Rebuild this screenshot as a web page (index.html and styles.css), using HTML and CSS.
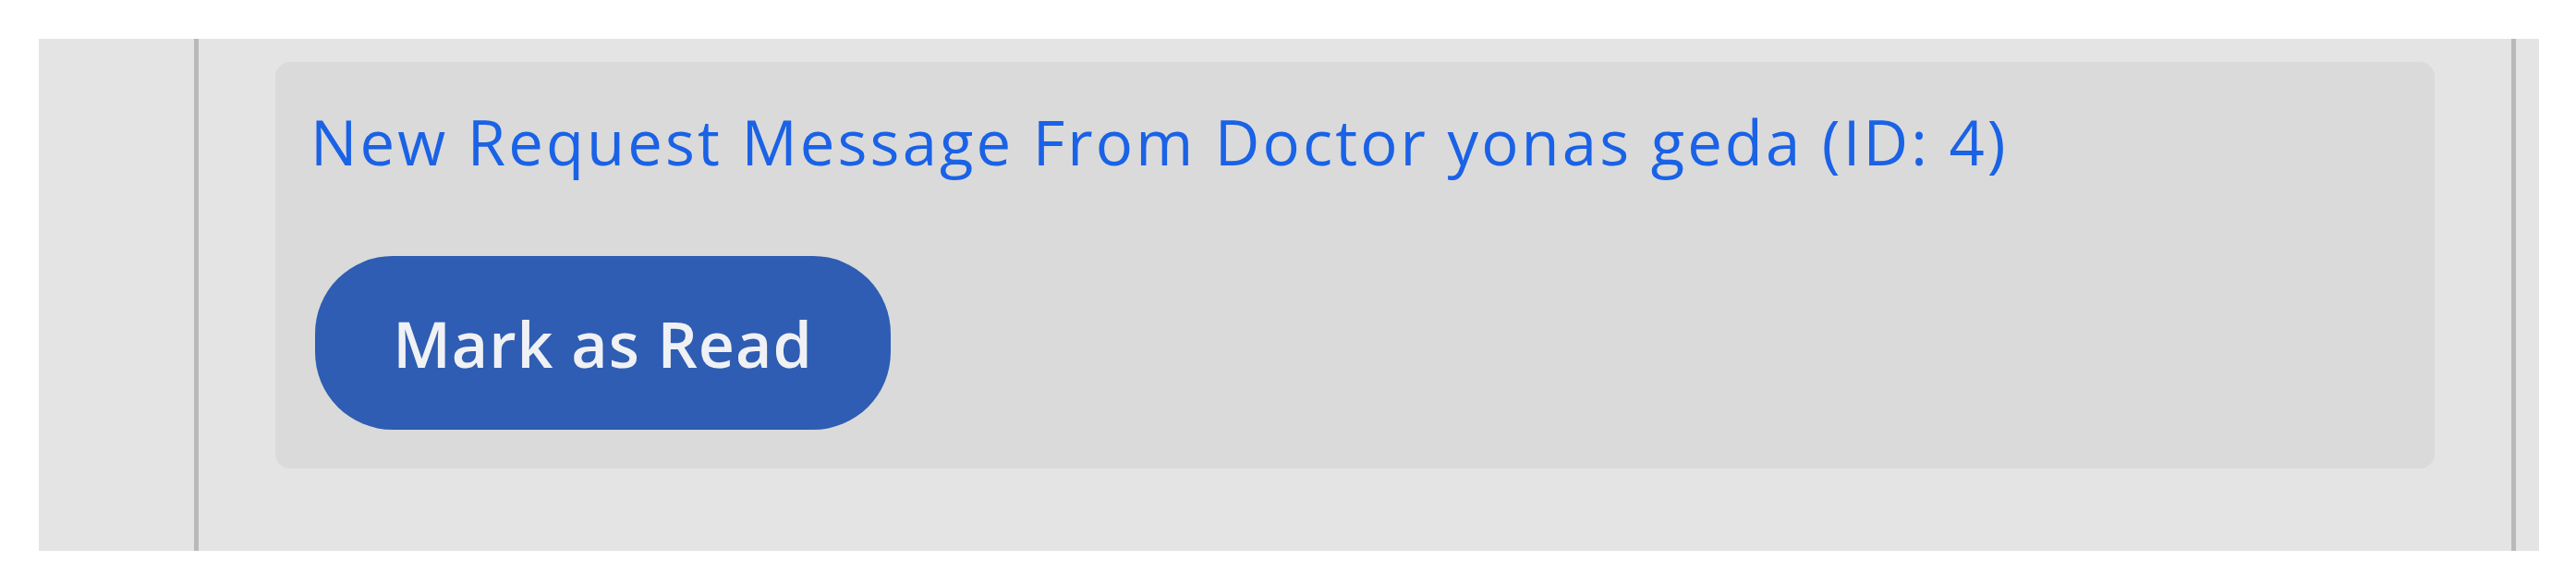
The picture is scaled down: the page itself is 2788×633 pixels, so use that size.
FILE: index.html
```html
<!DOCTYPE html>
<html lang="en">
<head>
    <meta charset="UTF-8">
    <meta name="viewport" content="width=device-width, initial-scale=1.0">
    <title>Notifications</title>
    <link rel="stylesheet" href="styles.css">
</head>
<body>
    <div class="page">
        <div class="panel">
            <div class="notification">
                <p class="notification-text">New Request Message From Doctor yonas geda (ID: 4)</p>
                <button class="mark-read" type="button">Mark as Read</button>
            </div>
        </div>
    </div>
</body>
</html>
```

FILE: styles.css
```css
body {
    margin: 0;
    padding: 42px 40px 37px 42px;
    background-color: #fff;
    font-family: "Open Sans", Arial, sans-serif;
}
.page {
    background-color: #e4e4e4;
    padding: 0 25px 0 168px;
    height: 554px;
    box-sizing: border-box;
    display: flex;
}
.panel {
    flex: 1;
    border-left: 5px solid #b9b9b9;
    border-right: 5px solid #b9b9b9;
    padding: 25px 83px 0 83px;
}
.notification {
    background-color: #dadada;
    border-radius: 16px;
    height: 440px;
    box-sizing: border-box;
    padding: 41px 43px;
    display: flex;
    flex-direction: column;
    align-items: flex-start;
}
.notification-text {
    margin: 0 0 0 -5px;
    color: #1a62e6;
    font-size: 67px;
    line-height: 91px;
    letter-spacing: 3.1px;
}
.mark-read {
    flex-shrink: 0;
    margin-top: 78px;
    width: 623px;
    height: 188px;
    padding: 0;
    border: none;
    border-radius: 84px / 84px;
    background-color: #2e5db3;
    color: #f0f1f4;
    font-family: "Open Sans", Arial, sans-serif;
    font-size: 68px;
    font-weight: 600;
    letter-spacing: 1px;
    cursor: pointer;
}
```
